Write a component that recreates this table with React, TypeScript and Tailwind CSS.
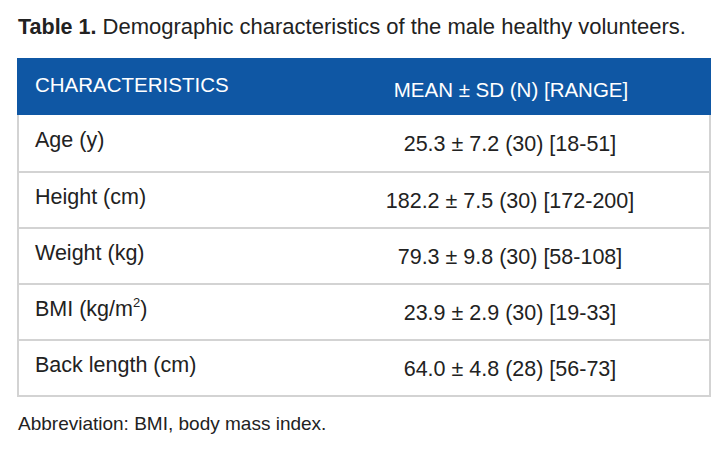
const rows: { label: React.ReactNode; value: string }[] = [
  { label: "Age (y)", value: "25.3 ± 7.2 (30) [18-51]" },
  { label: "Height (cm)", value: "182.2 ± 7.5 (30) [172-200]" },
  { label: "Weight (kg)", value: "79.3 ± 9.8 (30) [58-108]" },
  {
    label: (
      <>
        BMI (kg/m<sup className="text-[13px]">2</sup>)
      </>
    ),
    value: "23.9 ± 2.9 (30) [19-33]",
  },
  { label: "Back length (cm)", value: "64.0 ± 4.8 (28) [56-73]" },
];

export default function App() {
  return (
    <div className="h-[452px] w-[728px] bg-white font-['Liberation_Sans',Arial,sans-serif] text-[#222]">
      <h1 className="pl-[18px] pt-[14px] text-[22px] leading-[26px]">
        <span className="text-[21.5px] font-bold">Table 1.</span> Demographic characteristics of the
        male healthy volunteers.
      </h1>
      <div className="ml-[17px] mt-[18px] w-[694px] border-2 border-t-0 border-[#d3d3d3]">
        <div className="-mx-[2px] flex h-[57px] bg-[#0f57a4] text-[20.5px] text-white">
          <div className="flex w-[294px] items-center pb-[3px] pl-[18px]">CHARACTERISTICS</div>
          <div className="flex flex-1 items-center justify-center pt-[7px]">
            MEAN ± SD (N) [RANGE]
          </div>
        </div>
        {rows.map((r, i) => (
          <div
            key={i}
            className={`flex h-[56px] text-[21.5px] ${i > 0 ? "border-t-2 border-[#d3d3d3]" : ""}`}
          >
            <div className="flex w-[292px] items-center pb-[5px] pl-[16px]">{r.label}</div>
            <div className="flex flex-1 items-center justify-center pt-[2px]">{r.value}</div>
          </div>
        ))}
      </div>
      <p className="pl-[18px] pt-[13px] text-[19px]">Abbreviation: BMI, body mass index.</p>
    </div>
  );
}
